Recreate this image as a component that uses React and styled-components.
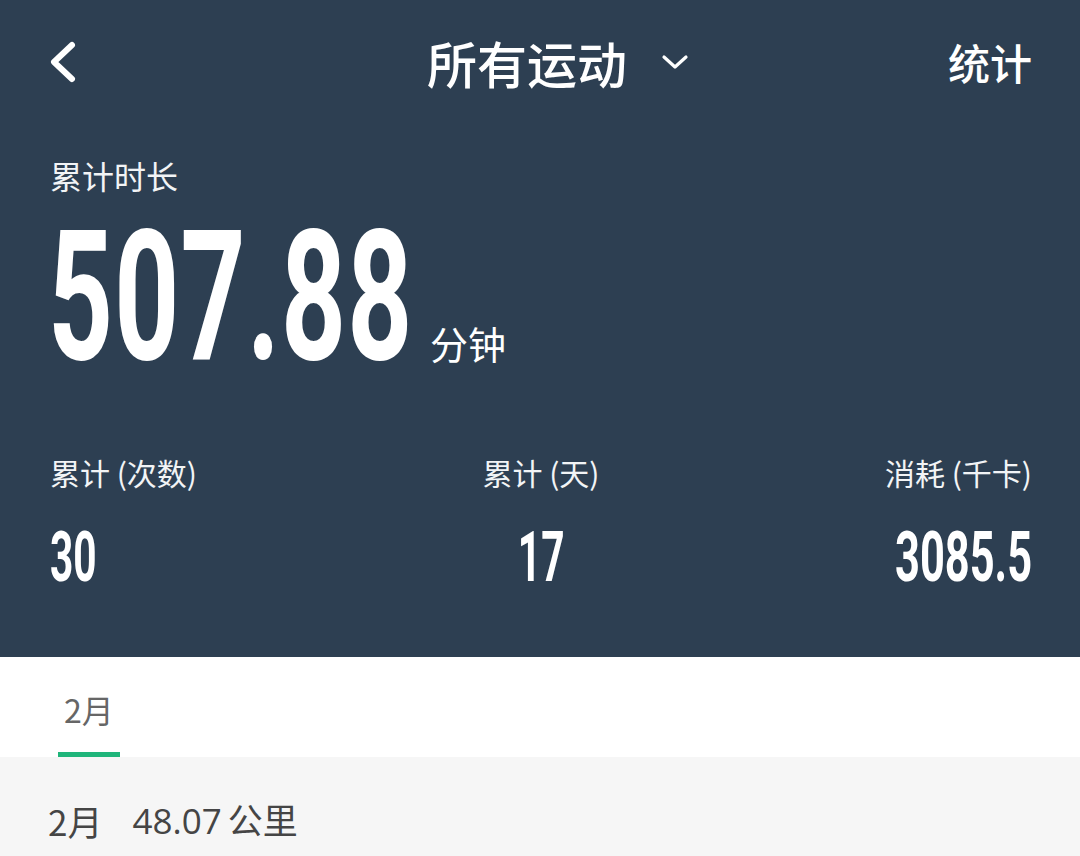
import styled, { createGlobalStyle } from 'styled-components';

const Global = createGlobalStyle`
  html, body {
    margin: 0;
    padding: 0;
    background: #f6f6f6;
  }
  body {
    font-family: "Noto Sans CJK SC", "Noto Sans", sans-serif;
  }
`;

const Page = styled.div`
  width: 1080px;
  height: 856px;
  overflow: hidden;
  background: #f6f6f6;
`;

const Header = styled.header`
  background: #2d3f52;
  color: #fff;
  padding: 0 48px 65px 50px;
`;

const Nav = styled.nav`
  height: 124px;
  display: grid;
  grid-template-columns: 1fr auto 1fr;
  align-items: center;
`;

const BackButton = styled.button`
  justify-self: start;
  background: none;
  border: 0;
  padding: 0;
  margin-left: -4px;
  display: flex;
  cursor: pointer;
`;

const Title = styled.div`
  display: flex;
  align-items: center;
  gap: 34px;
  font-size: 50px;
  font-weight: 500;
  line-height: 1;
  margin-left: 34px;
`;

const NavAction = styled.div`
  justify-self: end;
  font-size: 42px;
  font-weight: 500;
  line-height: 1;
`;

const Label = styled.div`
  font-size: ${(p) => p.size || 30}px;
  line-height: ${(p) => p.size || 30}px;
  padding-top: ${(p) => p.top || 0}px;
  color: #f2f4f6;
`;

const TotalRow = styled.div`
  display: flex;
  align-items: baseline;
  margin-top: 33px;
`;

const NumberBox = styled.div`
  width: ${(p) => p.width}px;
  flex: none;
  margin-left: -2px;
  font-family: Roboto, "Liberation Sans", sans-serif;
  font-weight: 700;
  font-size: ${(p) => p.size}px;
  line-height: 0.8;
  white-space: nowrap;
`;

const Condensed = styled.span`
  display: inline-block;
  transform: scaleX(${(p) => p.scale});
  transform-origin: ${(p) => p.origin || 'left'} center;
  letter-spacing: ${(p) => p.spacing || 0}px;
`;

const Unit = styled.span`
  font-size: 38px;
  font-weight: 400;
  line-height: 1;
`;

const Stats = styled.div`
  display: grid;
  grid-template-columns: 1fr 1fr 1fr;
  margin-top: 87px;
`;

const Stat = styled.div`
  display: flex;
  flex-direction: column;
  align-items: ${(p) => p.align};
  gap: 35px;
`;

const StatValue = styled.div`
  font-family: Roboto, "Liberation Sans", sans-serif;
  font-weight: 700;
  font-size: 70px;
  line-height: 1;
  white-space: nowrap;
`;

const Tabs = styled.div`
  height: 100px;
  background: #fff;
  display: flex;
  padding-left: 58px;
`;

const Tab = styled.div`
  width: 62px;
  display: flex;
  flex-direction: column;
  align-items: center;
  justify-content: space-between;
  padding-top: 36px;
  font-size: 32px;
  line-height: 32px;
  color: ${(p) => (p.active ? '#666' : '#999')};
  &::after {
    content: '';
    display: block;
    width: 100%;
    height: 5px;
    background: ${(p) => (p.active ? '#1fb57a' : 'transparent')};
  }
`;

const MonthRow = styled.div`
  display: flex;
  align-items: center;
  gap: 30px;
  padding: 46px 48px 0;
  font-size: 35px;
  line-height: 35px;
  color: #454545;
`;

const Distance = styled.span`
  font-family: "Open Sans", "Noto Sans", "Noto Sans CJK SC", sans-serif;
  & > b {
    font-weight: 400;
    margin-right: 6px;
  }
`;

const stats = [
  { label: '累计 (次数)', value: '30', align: 'flex-start', origin: 'left', scale: 0.58 },
  { label: '累计 (天)', value: '17', align: 'center', origin: 'center', scale: 0.58 },
  { label: '消耗 (千卡)', value: '3085.5', align: 'flex-end', origin: 'right', scale: 0.62 },
];

export default function App() {
  return (
    <Page>
      <Global />
      <Header>
        <Nav>
          <BackButton aria-label="返回">
            <svg width="40" height="44" viewBox="0 0 40 44">
              <path d="M26 5 L8 22 L26 39" fill="none" stroke="#fff" strokeWidth="6" strokeLinecap="round" strokeLinejoin="round" />
            </svg>
          </BackButton>
          <Title>
            所有运动
            <svg width="28" height="18" viewBox="0 0 28 18">
              <path d="M3 4 L14 14 L25 4" fill="none" stroke="#fff" strokeWidth="3.2" strokeLinecap="round" strokeLinejoin="round" />
            </svg>
          </Title>
          <NavAction>统计</NavAction>
        </Nav>

        <Label size={32} top={35}>累计时长</Label>
        <TotalRow>
          <NumberBox width={382} size={182}>
            <Condensed scale={0.623} spacing={2}>507.88</Condensed>
          </NumberBox>
          <Unit>分钟</Unit>
        </TotalRow>

        <Stats>
          {stats.map((s) => (
            <Stat key={s.label} align={s.align}>
              <Label size={30}>{s.label}</Label>
              <StatValue>
                <Condensed scale={s.scale} origin={s.origin}>{s.value}</Condensed>
              </StatValue>
            </Stat>
          ))}
        </Stats>
      </Header>

      <Tabs>
        <Tab active>2月</Tab>
      </Tabs>

      <MonthRow>
        <span>2月</span>
        <Distance><b>48.07</b>公里</Distance>
      </MonthRow>
    </Page>
  );
}
